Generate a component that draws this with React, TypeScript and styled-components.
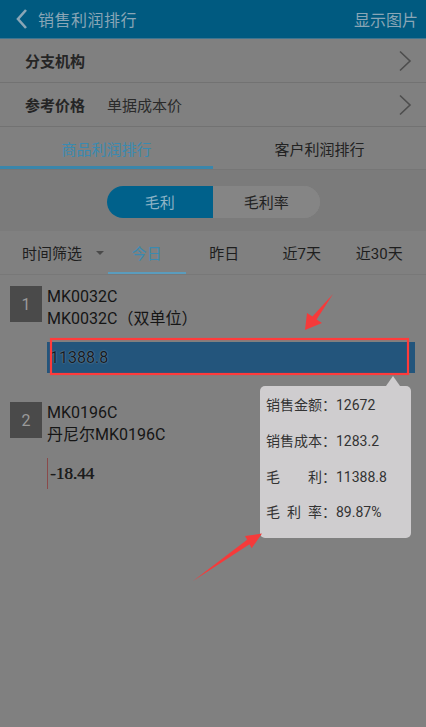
import React from "react";
import styled, { createGlobalStyle } from "styled-components";

const Global = createGlobalStyle`
  html, body { margin: 0; padding: 0; background: #808080; }
  body { font-family: Roboto, "Noto Sans CJK SC", sans-serif; }
  * { box-sizing: border-box; }
`;

const Page = styled.div`
  position: relative;
  width: 426px;
  height: 727px;
  background: #808080;
  overflow: hidden;
  color: #1e1e1e;
`;

const Header = styled.header`
  height: 39px;
  background: #005a80;
  display: flex;
  align-items: center;
  padding: 0 8px 0 15px;
  border-bottom: 1px solid #3f7590;
  color: #8aa6b6;
  font-size: 16px;
`;

const Title = styled.div`
  flex: 1;
  margin-left: 9px;
  letter-spacing: 0.5px;
`;

const Row = styled.div`
  height: 44px;
  display: flex;
  align-items: center;
  padding: 0 14px 0 25px;
  border-bottom: 1px solid #727272;
  font-size: 15px;
`;

const RowLabel = styled.span`
  font-weight: bold;
  color: #252525;
  width: 82px;
`;

const RowValue = styled.span`
  flex: 1;
  color: #2a2a2a;
`;

const Tabs = styled.div`
  display: flex;
  height: 43px;
  border-bottom: 1px solid #767676;
`;

const Tab = styled.div<{ $active?: boolean }>`
  flex: 1;
  display: flex;
  align-items: center;
  justify-content: center;
  font-size: 15px;
  color: ${(p) => (p.$active ? "#3a8ab0" : "#222")};
  border-bottom: 3px solid ${(p) => (p.$active ? "#3a86ab" : "transparent")};
  padding-top: 3px;
`;

const SegArea = styled.div`
  height: 61px;
  background: #7b7b7b;
  display: flex;
  align-items: center;
  justify-content: center;
  padding-top: 2px;
`;

const Seg = styled.div`
  display: flex;
  width: 213px;
  height: 32px;
  border-radius: 16px;
  overflow: hidden;
  background: #858585;
`;

const SegItem = styled.div<{ $active?: boolean }>`
  flex: 1;
  display: flex;
  align-items: center;
  justify-content: center;
  font-size: 15px;
  background: ${(p) => (p.$active ? "#00618b" : "#858585")};
  color: ${(p) => (p.$active ? "#8db3c6" : "#222")};
`;

const TimeRow = styled.div`
  height: 44px;
  display: flex;
  align-items: stretch;
  border-bottom: 1px solid #787878;
`;

const Filter = styled.div`
  width: 108px;
  display: flex;
  align-items: center;
  padding-left: 22px;
  font-size: 15px;
  color: #1e1e1e;
  gap: 14px;
`;

const Caret = styled.span`
  width: 0;
  height: 0;
  border-left: 4px solid transparent;
  border-right: 4px solid transparent;
  border-top: 4px solid #4a4a4a;
  margin-top: 1px;
`;

const TimeItem = styled.div<{ $active?: boolean }>`
  width: 77.5px;
  display: flex;
  align-items: center;
  justify-content: center;
  font-size: 15px;
  color: ${(p) => (p.$active ? "#3a8ab0" : "#1e1e1e")};
  border-bottom: 2px solid ${(p) => (p.$active ? "#5a9cbd" : "transparent")};
  padding-top: 2px;
`;

const List = styled.div`
  padding: 11px 0 0 10px;
  display: flex;
  flex-direction: column;
`;

const Item = styled.div`
  display: flex;
  flex-direction: column;
  margin-bottom: 29px;
`;

const ItemHead = styled.div`
  display: flex;
  gap: 5px;
`;

const Rank = styled.div`
  width: 32px;
  height: 36px;
  background: #4a4a4a;
  color: #9a9a9a;
  font-size: 16px;
  display: flex;
  align-items: center;
  justify-content: center;
`;

const Names = styled.div`
  display: flex;
  flex-direction: column;
  font-size: 16px;
  line-height: 22px;
  color: #151515;
`;

const Bar = styled.div`
  margin: 12px 0 0 37px;
  height: 31px;
  display: flex;
  align-items: center;
  position: relative;
`;

const BarFill = styled.div`
  position: absolute;
  left: 0;
  top: 0;
  bottom: 0;
  background: #23557c;
`;

const BarValue = styled.span<{ $serif?: boolean }>`
  position: relative;
  padding-left: 3px;
  font-size: ${(p) => (p.$serif ? "17px" : "16px")};
  font-family: ${(p) => (p.$serif ? '"Liberation Serif", serif' : "Roboto, sans-serif")};
  color: ${(p) => (p.$serif ? "#1c1c1c" : "#121a22")};
  text-shadow: ${(p) => (p.$serif ? "0.5px 0 0 #1c1c1c" : "0 0 1.5px #9aa8b4")};
`;

const Tooltip = styled.div`
  position: absolute;
  left: 260px;
  top: 386px;
  width: 151px;
  height: 152px;
  background: #cfcdcf;
  border-radius: 5px;
  padding: 9px 0 0 6px;
  display: flex;
  flex-direction: column;
  font-size: 14px;
  color: #333;
  &::before {
    content: "";
    position: absolute;
    right: 11px;
    top: -10px;
    border-left: 7px solid transparent;
    border-right: 7px solid transparent;
    border-bottom: 10px solid #cfcdcf;
  }
`;

const TipRow = styled.div`
  height: 36.7px;
  line-height: 20px;
  display: flex;
  white-space: pre;
`;

const TipLabel = styled.span`
  width: 56px;
  text-align: justify;
  text-align-last: justify;
`;

const Overlay = styled.svg`
  position: absolute;
  left: 0;
  top: 0;
  pointer-events: none;
`;

const Chevron = () => (
  <svg width="14" height="22" viewBox="0 0 14 22">
    <path d="M11 2 L3 11 L11 20" fill="none" stroke="#8aa6b6" strokeWidth="2.6" />
  </svg>
);

const RightArrow = () => (
  <svg width="14" height="22" viewBox="0 0 14 22">
    <path d="M2 1.5 L12 11 L2 20.5" fill="none" stroke="#4d4d4d" strokeWidth="1.6" />
  </svg>
);

const tips = [
  ["销售金额", "12672"],
  ["销售成本", "1283.2"],
  ["毛利", "11388.8"],
  ["毛利率", "89.87%"],
];

export default function App() {
  return (
    <Page>
      <Global />
      <Header>
        <Chevron />
        <Title>销售利润排行</Title>
        <span>显示图片</span>
      </Header>
      <Row>
        <RowLabel>分支机构</RowLabel>
        <RowValue />
        <RightArrow />
      </Row>
      <Row>
        <RowLabel>参考价格</RowLabel>
        <RowValue>单据成本价</RowValue>
        <RightArrow />
      </Row>
      <Tabs>
        <Tab $active>商品利润排行</Tab>
        <Tab>客户利润排行</Tab>
      </Tabs>
      <SegArea>
        <Seg>
          <SegItem $active>毛利</SegItem>
          <SegItem>毛利率</SegItem>
        </Seg>
      </SegArea>
      <TimeRow>
        <Filter>
          时间筛选
          <Caret />
        </Filter>
        <TimeItem $active>今日</TimeItem>
        <TimeItem>昨日</TimeItem>
        <TimeItem>近7天</TimeItem>
        <TimeItem>近30天</TimeItem>
      </TimeRow>
      <List>
        <Item>
          <ItemHead>
            <Rank>1</Rank>
            <Names>
              <span>MK0032C</span>
              <span>MK0032C（双单位）</span>
            </Names>
          </ItemHead>
          <Bar>
            <BarFill style={{ width: "368px" }} />
            <BarValue>11388.8</BarValue>
          </Bar>
        </Item>
        <Item>
          <ItemHead>
            <Rank>2</Rank>
            <Names>
              <span>MK0196C</span>
              <span>丹尼尔MK0196C</span>
            </Names>
          </ItemHead>
          <Bar>
            <BarFill style={{ width: "1px", background: "#8a4a4a" }} />
            <BarValue $serif>-18.44</BarValue>
          </Bar>
        </Item>
      </List>
      <Tooltip>
        {tips.map(([k, v]) => (
          <TipRow key={k}>
            <TipLabel>{k}</TipLabel>
            <span>：{v}</span>
          </TipRow>
        ))}
      </Tooltip>
      <Overlay width="426" height="727">
        <rect x="51" y="339" width="357" height="35" fill="none" stroke="#ff3b3b" strokeWidth="2.2" />
        <polygon points="333,294 316.6,319.4 322,323 305,330 307,313 312.4,316.6" fill="#f53a3a" />
        <polygon points="193,581 247.1,539.8 245,536 262,533.5 251.7,548.3 249.5,544.2" fill="#f53a3a" />
      </Overlay>
    </Page>
  );
}
